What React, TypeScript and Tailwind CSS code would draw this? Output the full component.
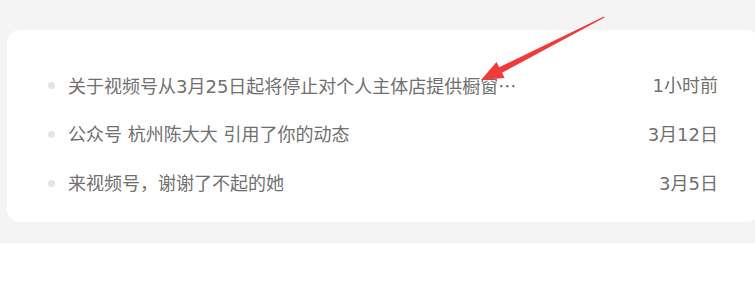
const items = [
  { title: "关于视频号从3月25日起将停止对个人主体店提供橱窗", more: true, time: "1小时前" },
  { title: "公众号 杭州陈大大 引用了你的动态", more: false, time: "3月12日" },
  { title: "来视频号，谢谢了不起的她", more: false, time: "3月5日" },
];

export default function App() {
  return (
    <div
      className="relative w-[755px] h-[283px] overflow-hidden bg-white"
      style={{ fontFamily: '"DejaVu Sans", "Noto Sans CJK SC", sans-serif' }}
    >
      <div className="bg-[#f4f4f4] h-[243px] pt-[30px] pl-[7px]">
        <div className="w-[753px] h-[192px] bg-white rounded-[13px] pt-[31px] pl-[41px] pr-[42px]">
          {items.map((item) => (
            <div key={item.time} className="flex items-center h-[49px]">
              <span className="w-[7px] h-[7px] rounded-full bg-[#e4e4e4] shrink-0" />
              <span className="ml-[13px] whitespace-nowrap text-[18px] text-[#707070] leading-[24px]">
                {item.title}
                {item.more && (
                  <span style={{ fontFamily: '"Noto Sans CJK SC", sans-serif' }}>…</span>
                )}
              </span>
              <span className="ml-auto text-[18px] text-[#707070] leading-[24px] whitespace-nowrap">
                {item.time}
              </span>
            </div>
          ))}
        </div>
      </div>

      {/* annotation arrow */}
      <svg
        className="absolute left-0 top-0 pointer-events-none"
        width="755"
        height="283"
        viewBox="0 0 755 283"
      >
        <polygon
          points="481,80 496.5,62 499.2,67.3 604,16.5 604.5,17.5 502,72.7 504.7,78"
          fill="#f23a3a"
        />
      </svg>
    </div>
  );
}
